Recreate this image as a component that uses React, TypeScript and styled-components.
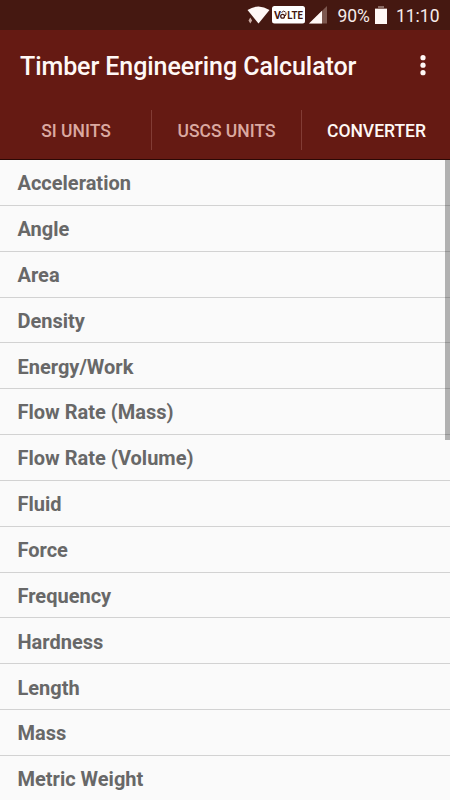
import React from "react";
import styled, { createGlobalStyle } from "styled-components";

const GlobalStyle = createGlobalStyle`
  * { box-sizing: border-box; }
  body { margin: 0; background: #fafafa; font-family: Roboto, "Liberation Sans", sans-serif; }
`;

const Screen = styled.div`
  display: flex;
  flex-direction: column;
  width: 450px;
  height: 800px;
  overflow: hidden;
  background: #fafafa;
`;

const StatusBar = styled.div`
  display: flex;
  flex: none;
  align-items: center;
  height: 30px;
  padding: 1px 10.5px 0 0;
  justify-content: flex-end;
  background: #451811;
  color: #f6eceb;
  font-size: 17.5px;
  line-height: 30px;
`;

const StatusIcons = styled.svg`
  display: block;
  flex: none;
  width: 82px;
  height: 24px;
  margin-right: 8px;
`;

const BatteryIcon = styled.svg`
  display: block;
  flex: none;
  width: 12px;
  height: 20px;
  margin: 0 9px 0 5px;
`;

const AppBar = styled.header`
  display: flex;
  flex: none;
  align-items: center;
  justify-content: space-between;
  height: 70px;
  padding: 2px 23.5px 0 20px;
  background: #651a13;
`;

const Title = styled.h1`
  margin: 0;
  padding-top: 2px;
  color: #fff8f6;
  font-size: 25px;
  font-weight: 500;
  letter-spacing: -0.08px;
  line-height: 32px;
  white-space: nowrap;
`;

const MenuButton = styled.button`
  display: flex;
  padding: 0;
  border: 0;
  background: none;
`;

const TabBar = styled.nav`
  display: grid;
  flex: none;
  grid-template-columns: repeat(3, 150px);
  height: 60px;
  padding: 10px 0 0 1px;
  background: #651a13;
  border-bottom: 1px solid #2c0805;
  overflow: hidden;
`;

const Tab = styled.div<{ $active?: boolean }>`
  display: flex;
  align-items: center;
  justify-content: center;
  height: 40px;
  padding-top: 2px;
  color: ${(p) => (p.$active ? "#fff8f6" : "#dba9a1")};
  font-size: 17.5px;
  font-weight: 500;
  white-space: nowrap;

  & + & { border-left: 1px solid #823c35; }
`;

const ListArea = styled.main`
  position: relative;
  flex: 1;
  min-height: 0;
  overflow: hidden;
`;

const List = styled.ul`
  margin: 0;
  padding: 0;
  list-style: none;
`;

const Row = styled.li`
  display: flex;
  align-items: center;
  height: 45.85px;
  padding: 1.6px 17.5px 0;
  border-bottom: 1px solid #d2d2d2;
  color: #686868;
  font-size: 20px;
  font-weight: 700;
`;

const ScrollThumb = styled.div`
  position: absolute;
  top: 0;
  right: 0;
  width: 5px;
  height: 280px;
  background: rgba(0, 0, 0, 0.29);
`;

const units = [
  "Acceleration", "Angle", "Area", "Density", "Energy/Work",
  "Flow Rate (Mass)", "Flow Rate (Volume)", "Fluid", "Force",
  "Frequency", "Hardness", "Length", "Mass", "Metric Weight",
];

const VolteText = styled.text`
  font-size: 10px;
  font-weight: 700;
  fill: #451811;
`;

export default function App() {
  return (
    <>
      <GlobalStyle />
      <Screen>
        <StatusBar>
          <StatusIcons viewBox="247 3 82 24">
            <path d="M247.5 9Q258.5 2 269.5 9L258.5 22.5Z" fill="#fff8f6" />
            <path d="M250.3 16.5l1.8 3-1.8 3-1.8-3z" fill="#c9aaa2" />
            <rect x="272" y="5" width="33" height="17.5" rx="2.5" fill="#fff" />
            <VolteText x="274" y="17.5" textLength="7" lengthAdjust="spacingAndGlyphs">V</VolteText>
            <circle cx="282.6" cy="15.2" r="1.9" fill="none" stroke="#451811" strokeWidth="1.3" />
            <path d="M281.5 11.5q2-2.5 4-.5M284.5 15.5q2-1 1.5-4" fill="none" stroke="#451811" />
            <VolteText x="287.3" y="17.5" textLength="15.5" lengthAdjust="spacingAndGlyphs">LTE</VolteText>
            <path d="M327 5V22.5H309Z" fill="#7d5850" />
            <path d="M322 9.8V22.5H309Z" fill="#fff8f6" />
          </StatusIcons>
          <span>90%</span>
          <BatteryIcon viewBox="0 0 12 20">
            <path d="M3 0h6v2h3v3H0V2h3z" fill="#8a6a63" />
            <path d="M0 3h12v15H0z" fill="#fff8f6" />
          </BatteryIcon>
          <span>11:10</span>
        </StatusBar>
        <AppBar>
          <Title>Timber Engineering Calculator</Title>
          <MenuButton aria-label="More options">
            <svg width="8" height="22" viewBox="0 0 8 22" fill="#fff8f6">
              <circle cx="4" cy="2.7" r="2.6" />
              <circle cx="4" cy="10.2" r="2.6" />
              <circle cx="4" cy="17.7" r="2.6" />
            </svg>
          </MenuButton>
        </AppBar>
        <TabBar>
          <Tab>SI UNITS</Tab>
          <Tab>USCS UNITS</Tab>
          <Tab $active>CONVERTER</Tab>
        </TabBar>
        <ListArea>
          <List>
            {units.map((u) => <Row key={u}>{u}</Row>)}
          </List>
          <ScrollThumb />
        </ListArea>
      </Screen>
    </>
  );
}
